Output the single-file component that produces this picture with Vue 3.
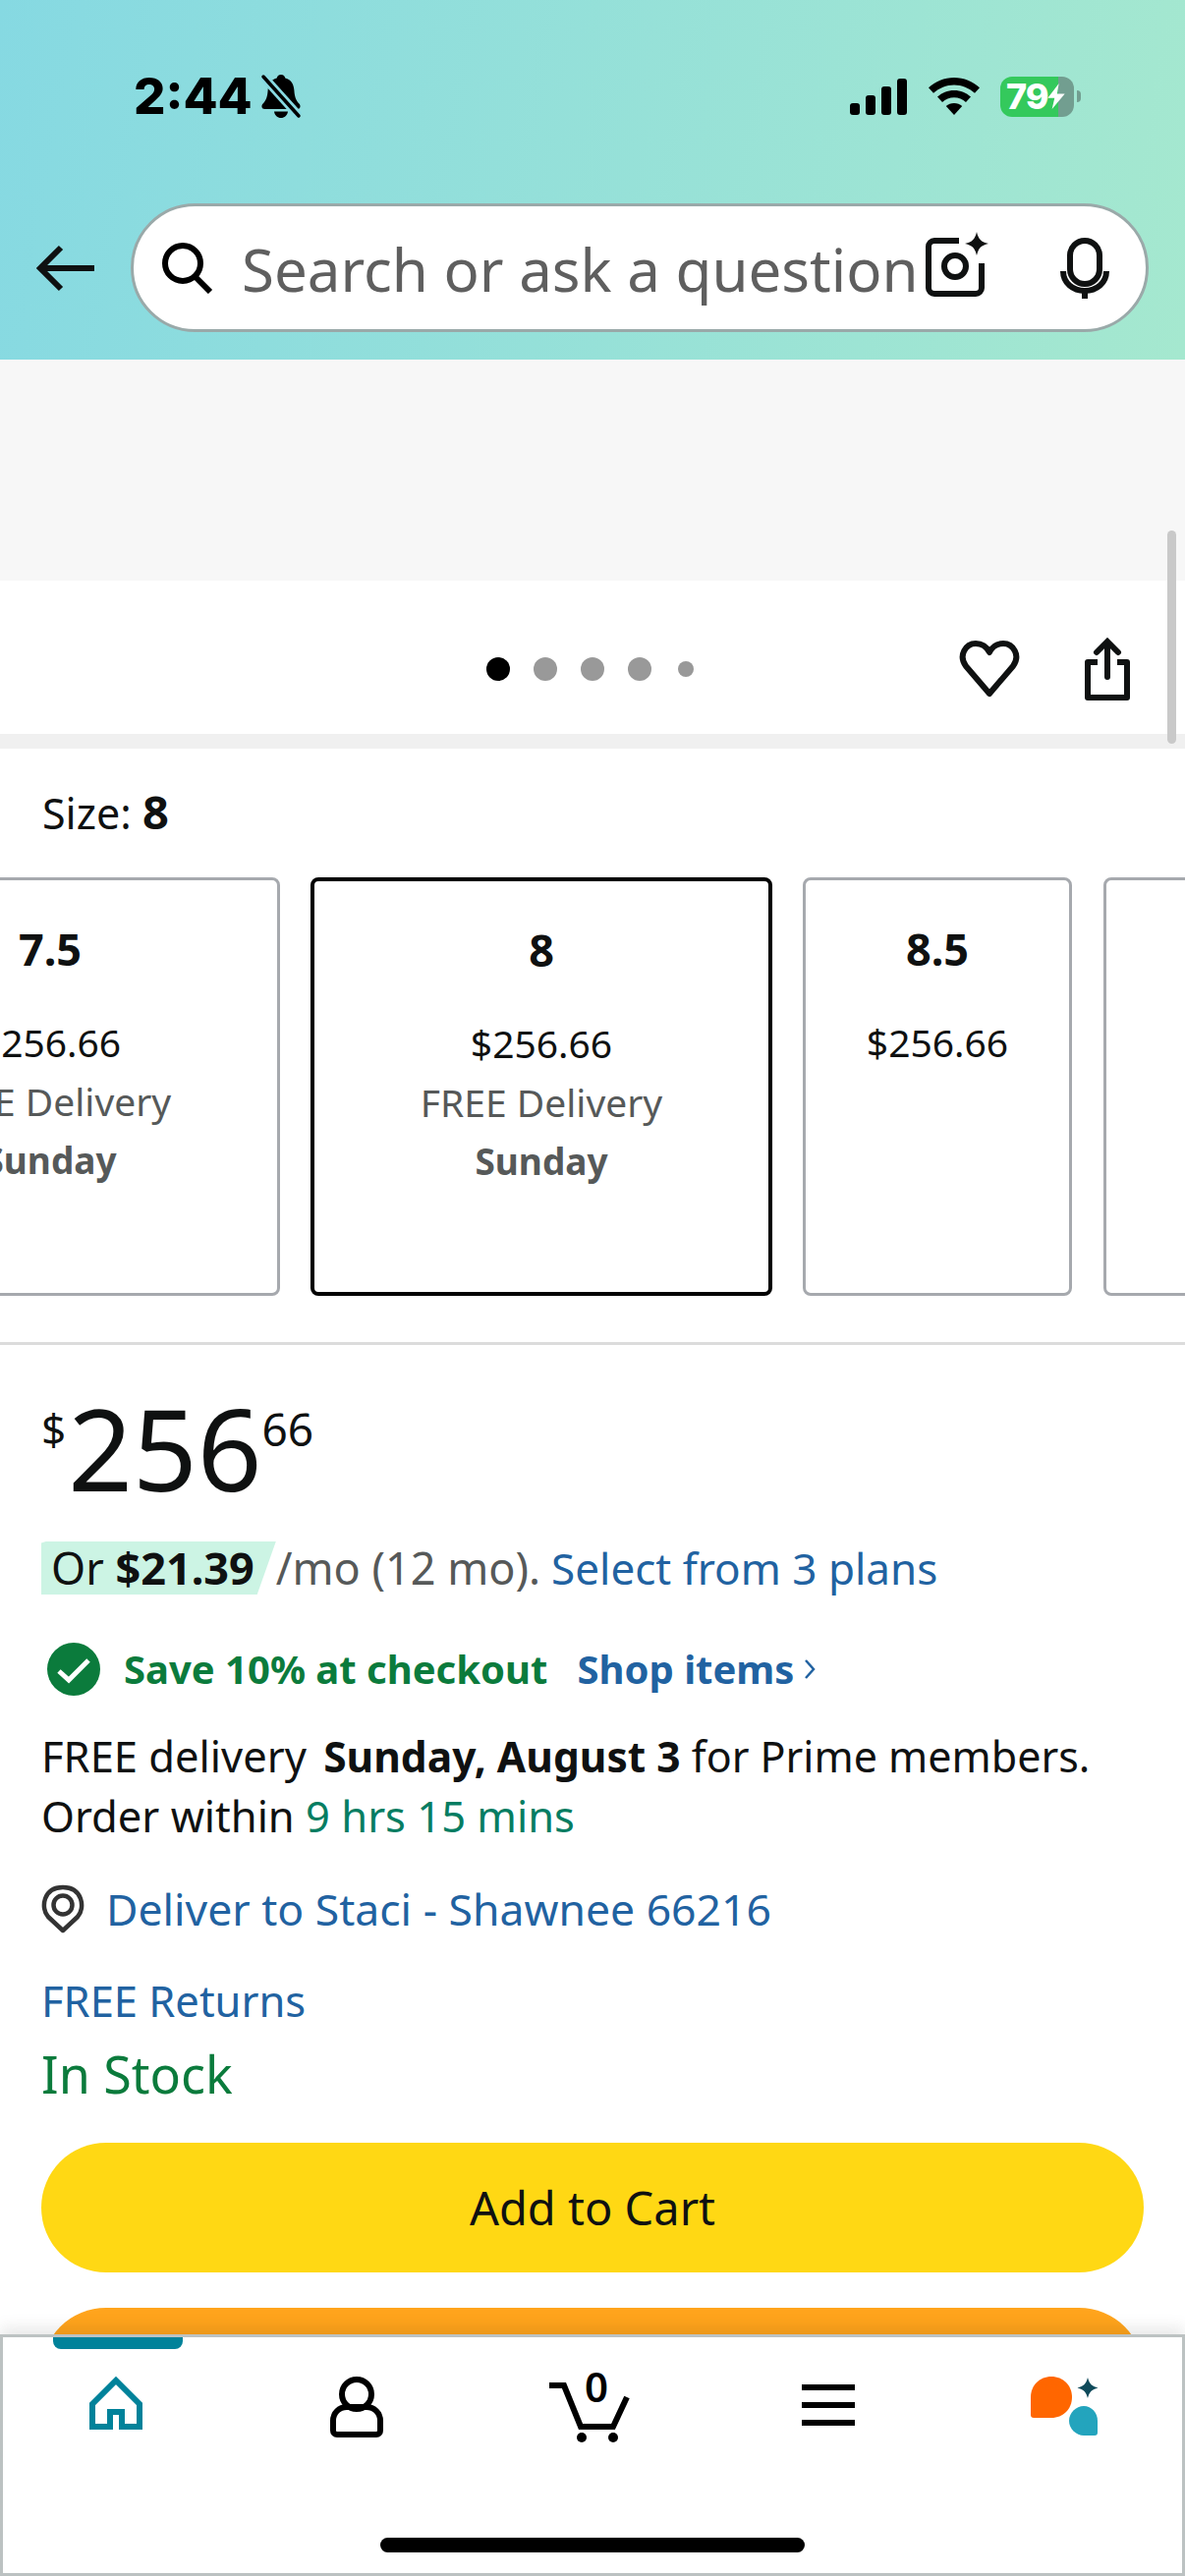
<template>
  <div class="page">
    <header class="top">
      <div class="status">
        <div class="status-left">
          <span class="time">2:44</span>
          <svg class="bell" width="42" height="46" viewBox="0 0 42 46">
            <path d="M21 1c-2.500 0-4 1.600-4.300 3.600C10.500 6.300 8 11 7.600 17c-.4 6-1.600 10-5 13.500C.8 32.300 1 36 4.500 36h33c3.500 0 3.700-3.700 1.900-5.500-3.400-3.500-4.600-7.500-5-13.500C34 11 31.500 6.300 25.300 4.600 25 2.600 23.500 1 21 1zM14 38.500h14c-.6 4-3.400 6.500-7 6.500s-6.400-2.500-7-6.500z" fill="#000" />
            <path d="M3 3l36 40" stroke="#88dae2" stroke-width="9" />
            <path d="M3 3l36 40" stroke="#000" stroke-width="3.500" stroke-linecap="round" />
          </svg>
        </div>
        <div class="status-right">
          <div class="signal">
            <i class="b1"></i><i class="b2"></i><i class="b3"></i><i class="b4"></i>
          </div>
          <svg class="wifi" width="52" height="38" viewBox="0 0 52 38">
            <path d="M26 0c10 0 19 3.800 26 10.300l-5 5.500C41.200 10.500 34 7.400 26 7.400S10.800 10.500 5 15.800L0 10.300C7 3.800 16 0 26 0z" />
            <path d="M26 13c6.600 0 12.500 2.500 17 6.600l-5 5.400c-3.200-2.900-7.400-4.700-12-4.700s-8.800 1.800-12 4.700l-5-5.400C13.500 15.500 19.400 13 26 13z" />
            <path d="M26 26c3.200 0 6 1.100 8.200 3L26 38l-8.200-9c2.200-1.900 5-3 8.200-3z" />
          </svg>
          <div class="battery">
            <span class="batt-num">79</span>
            <svg class="bolt" width="18" height="26" viewBox="0 0 20 30">
              <path d="M13 0L0 17h8L5 30 20 12h-9z" fill="#fff" />
            </svg>
          </div>
          <span class="batt-tip"></span>
        </div>
      </div>
      <div class="search-row">
        <svg class="back" width="60" height="48" viewBox="0 0 60 48">
          <path d="M59 24H5M25 3L4 24l21 21" fill="none" stroke="#0f1111" stroke-width="6" />
        </svg>
        <div class="search">
          <svg class="glass" width="52" height="52" viewBox="0 0 52 52">
            <circle cx="21" cy="21" r="18" fill="none" stroke="#000" stroke-width="6" />
            <path d="M33 34l16 16" stroke="#000" stroke-width="6" />
          </svg>
          <span class="placeholder">Search or ask a question</span>
          <svg class="cam" width="66" height="66" viewBox="0 0 66 66">
            <path d="M34 9H9a6 6 0 0 0-6 6v42a6 6 0 0 0 6 6h42a6 6 0 0 0 6-6V32" fill="none" stroke="#0f1111" stroke-width="6" />
            <circle cx="30" cy="35" r="11" fill="none" stroke="#0f1111" stroke-width="6" />
            <path d="M52 0c1.500 7 4.500 10.500 12 12-7.500 1.500-10.500 5-12 12-1.500-7-4.500-10.500-12-12 7.500-1.500 10.500-5 12-12z" fill="#0f1111" />
          </svg>
          <svg class="mic" width="50" height="62" viewBox="0 0 50 62">
            <rect x="10" y="3" width="30" height="44" rx="15" fill="none" stroke="#0f1111" stroke-width="6" />
            <path d="M3 34c0 12 10 20 22 20s22-8 22-20" fill="none" stroke="#0f1111" stroke-width="6" />
            <path d="M25 52v10" stroke="#0f1111" stroke-width="6" />
          </svg>
        </div>
      </div>
    </header>

    <div class="photo-end"></div>
    <div class="actions">
      <span></span>
      <div class="dots">
        <i class="dot on"></i><i class="dot"></i><i class="dot"></i><i class="dot"></i><i class="dot small"></i>
      </div>
      <div class="action-icons">
        <svg width="62" height="58" viewBox="0 0 62 58">
          <path d="M31 54L7 26C-1 15 7 3 17 3c6 0 11 3 14 9 3-6 8-9 14-9 10 0 18 12 10 23z" fill="none" stroke="#0f1111" stroke-width="6" stroke-linejoin="round" />
        </svg>
        <svg width="50" height="64" viewBox="0 0 50 64">
          <path d="M15 25H5v36h40V25H35" fill="none" stroke="#0f1111" stroke-width="6" stroke-linejoin="round" />
          <path d="M25 40V5M14 15L25 4l11 11" fill="none" stroke="#0f1111" stroke-width="6" stroke-linecap="round" />
        </svg>
      </div>
    </div>
    <div class="band"></div>

    <div class="size-label">Size: <b>8</b></div>
    <div class="sizes">
      <div v-for="s in sizes" :key="s.name" class="size-card" :class="{ picked: s.picked, thin: s.thin }">
        <div class="size-name">{{ s.name }}</div>
        <div class="size-price">{{ s.price }}</div>
        <div v-if="s.free" class="size-free">FREE Delivery</div>
        <div v-if="s.free" class="size-day">Sunday</div>
      </div>
    </div>
    <div class="divider"></div>

    <section class="buy">
      <div class="price">
        <span class="cur">$</span><span class="whole">256</span><span class="cents">66</span>
      </div>
      <div class="plan">
        <span class="plan-tag">Or <b>$21.39</b></span>
        <span class="muted">/mo (12 mo).</span>
        <span class="link">Select from 3 plans</span>
      </div>
      <div class="save">
        <svg width="54" height="54" viewBox="0 0 54 54">
          <circle cx="27" cy="27" r="27" fill="#0b7b3c" />
          <path d="M12 29l10 9 20-20" fill="none" stroke="#fff" stroke-width="5" />
        </svg>
        <b class="save-text">Save 10% at checkout</b>
        <b class="link shop">Shop items</b>
        <svg width="12" height="22" viewBox="0 0 12 22">
          <path d="M2 2l8 9-8 9" fill="none" stroke="#2162a1" stroke-width="2.500" />
        </svg>
      </div>
      <p class="delivery">
        FREE delivery <b>Sunday, August 3</b> <span class="prime">for Prime members.</span><br />
        Order within <span class="countdown">9 hrs 15 mins</span>
      </p>
      <div class="deliver-to">
        <svg width="44" height="50" viewBox="0 0 44 50">
          <path d="M22 47L7 33C-1 24 2 3 22 3s23 21 15 30z" fill="none" stroke="#333" stroke-width="4.500" stroke-linejoin="round" />
          <circle cx="22" cy="21" r="9.500" fill="none" stroke="#333" stroke-width="4.500" />
        </svg>
        <span class="link">Deliver to Staci - Shawnee 66216</span>
      </div>
      <div class="link returns">FREE Returns</div>
      <div class="stock">In Stock</div>
      <button class="btn cart-btn">Add to Cart</button>
      <button class="btn now-btn"></button>
    </section>

    <nav class="tabs">
      <span class="tab-mark"></span>
      <div class="tab home">
        <svg width="60" height="60" viewBox="0 0 60 60">
          <path d="M6 53h18V38h12v15h18V30L30 6 6 30z" fill="none" stroke="#00829a" stroke-width="6" />
        </svg>
      </div>
      <div class="tab">
        <svg width="60" height="64" viewBox="0 0 60 64">
          <circle cx="30" cy="20" r="15" fill="none" stroke="#000" stroke-width="6" />
          <path d="M20 33h20c8 0 14 6 14 14v10a4 4 0 0 1-4 4H10a4 4 0 0 1-4-4V47c0-8 6-14 14-14z" fill="none" stroke="#000" stroke-width="6" />
        </svg>
      </div>
      <div class="tab cart">
        <svg width="84" height="70" viewBox="0 0 84 70">
          <path d="M0 11h15l17 42h33l14-30" fill="none" stroke="#000" stroke-width="6" />
          <circle cx="33" cy="64" r="5" /><circle cx="65" cy="64" r="5" />
        </svg>
        <span class="cart-count">0</span>
      </div>
      <div class="tab">
        <div class="burger"><i></i><i></i><i></i></div>
      </div>
      <div class="tab rufus">
        <svg width="72" height="62" viewBox="0 0 72 62">
          <path d="M22 2c12 0 21 9 21 21s-9 21-21 21H4a3 3 0 0 1-3-3V23C1 11 10 2 22 2z" fill="#ff6600" />
          <path d="M55 32c8 0 14 7 14 15v12a3 3 0 0 1-3 3H55c-8 0-15-7-15-15s7-15 15-15z" fill="#23a4bd" />
          <path d="M59 3c1.500 6 4 9 10.500 10.500C63 15 60.500 18 59 24c-1.500-6-4-9-10.500-10.500C55 12 57.500 9 59 3z" fill="#0f4a5a" />
        </svg>
      </div>
      <span class="home-bar"></span>
    </nav>

    <span class="scrollbar"></span>
  </div>
</template>

<script setup>
const sizes = [
  { name: "7.5", price: "$256.66", free: true },
  { name: "8", price: "$256.66", free: true, picked: true },
  { name: "8.5", price: "$256.66", thin: true },
  { name: "9", price: "", thin: true },
];
</script>

<style>
body {
  margin: 0;
  background: #fff;
}
</style>

<style scoped>
.page {
  position: relative;
  width: 1206px;
  height: 2622px;
  overflow: hidden;
  background: #fff;
  color: #0f1111;
  font-family: "Noto Sans", "Open Sans", sans-serif;
}
.top {
  height: 366px;
  box-sizing: border-box;
  padding-top: 75px;
  background: linear-gradient(100deg, #86d9e2, #a5e8cf);
}
.status {
  height: 46px;
  display: flex;
  justify-content: space-between;
  padding: 0 106px 0 136px;
}
.status-left {
  display: flex;
  align-items: center;
  gap: 8px;
}
.time {
  font-family: Inter, sans-serif;
  font-weight: 800;
  font-size: 51px;
  line-height: 46px;
  color: #000;
}
.status-right {
  display: flex;
  align-items: center;
}
.signal {
  display: flex;
  align-items: flex-end;
  gap: 6px;
  height: 37px;
  margin-right: 22px;
}
.signal i {
  width: 10px;
  background: #000;
  border-radius: 3px;
}
.b1 { height: 12px; }
.b2 { height: 20px; }
.b3 { height: 29px; }
.b4 { height: 37px; }
.wifi {
  margin-right: 21px;
}
.battery {
  width: 75px;
  height: 41px;
  border-radius: 12px;
  display: flex;
  align-items: center;
  padding-left: 6px;
  box-sizing: border-box;
  background: linear-gradient(90deg, #34c95c 79%, #729e90 79%);
}
.batt-num {
  font-family: Inter, sans-serif;
  font-weight: 800;
  font-size: 36px;
  letter-spacing: -1px;
  color: #fff;
}
.bolt {
  margin-left: -1px;
  flex: none;
}
.batt-tip {
  width: 4px;
  height: 12px;
  margin-left: 3px;
  background: #729e90;
  border-radius: 0 6px 6px 0;
}
.search-row {
  display: flex;
  align-items: center;
  margin-top: 86px;
  padding-left: 37px;
}
.back {
  margin-right: 36px;
}
.search {
  width: 1036px;
  height: 131px;
  box-sizing: border-box;
  border: 3px solid #9aa9a9;
  border-radius: 66px;
  background: #fff;
  display: flex;
  align-items: center;
  padding-left: 29px;
}
.glass {
  margin-right: 29px;
}
.placeholder {
  width: 692px;
  flex: none;
  padding-top: 3px;
  white-space: nowrap;
  font-size: 60px;
  color: #5f5f5f;
}
.cam {
  margin: -8px 0 0 4px;
  flex: none;
}
.mic {
  margin: 0 0 0 71px;
  flex: none;
}
.photo-end {
  height: 225px;
  background: #f7f7f7;
}
.actions {
  height: 156px;
  box-sizing: border-box;
  padding-top: 24px;
  display: grid;
  grid-template-columns: 1fr auto 1fr;
  align-items: center;
}
.dots {
  display: flex;
  align-items: center;
  gap: 24px;
  margin-right: 5px;
}
.dot {
  width: 24px;
  height: 24px;
  border-radius: 50%;
  background: #999;
}
.dot.on {
  background: #000;
}
.dot.small {
  width: 16px;
  height: 16px;
  margin-left: 3px;
}
.action-icons {
  display: flex;
  align-items: center;
  justify-content: flex-end;
  gap: 64px;
  padding-right: 54px;
}
.band {
  height: 15px;
  background: #f0f0f0;
}
.size-label {
  margin-top: 34px;
  padding-left: 43px;
  font-size: 43px;
  line-height: 60px;
}
.size-label b {
  font-size: 47px;
}
.sizes {
  display: flex;
  gap: 32px;
  margin: 35px 0 0 -183px;
  width: 2000px;
}
.size-card {
  flex: none;
  width: 468px;
  height: 426px;
  box-sizing: border-box;
  border: 3px solid #a6a9ae;
  border-radius: 8px;
  padding-top: 40px;
  text-align: center;
  font-size: 39px;
  line-height: 60px;
}
.size-card.picked {
  width: 470px;
  margin: 0 -1px;
  border: 4px solid #000;
}
.size-card.thin {
  width: 274px;
}
.size-name {
  font-size: 45px;
  font-weight: 700;
  margin-bottom: 35px;
}
.size-free {
  color: #565959;
}
.size-day {
  color: #565959;
  font-weight: 700;
  font-size: 37px;
}
.divider {
  height: 3px;
  margin-top: 47px;
  background: #dcdcdc;
}
.buy {
  padding: 0 42px;
}
.price {
  display: flex;
  align-items: flex-start;
  margin-top: 40px;
}
.cur {
  font-size: 44px;
  line-height: 70px;
  margin: 10px 2px 0 0;
}
.whole {
  font-size: 115px;
  line-height: 130px;
}
.cents {
  font-size: 46px;
  line-height: 70px;
  margin: 10px 0 0 0;
}
.plan {
  display: flex;
  align-items: center;
  margin-top: 30px;
  font-size: 45px;
  line-height: 54px;
  white-space: nowrap;
}
.plan-tag {
  background: #ccf4e4;
  padding: 0 22px 0 10px;
  clip-path: polygon(0 3%, 2% 0, 100% 0, 92% 100%, 0 100%);
}
.muted {
  color: #565959;
  margin-right: 11px;
}
.plan .link {
  font-size: 44px;
}
.link {
  color: #2162a1;
}
.save {
  display: flex;
  align-items: center;
  margin-top: 49px;
  padding-left: 6px;
  font-size: 40px;
  line-height: 54px;
  white-space: nowrap;
}
.save-text {
  color: #0b7b3c;
  margin-left: 24px;
}
.shop {
  margin: 0 10px 0 30px;
}
.delivery {
  margin: 31px 0 0;
  font-size: 43.500px;
  line-height: 60px;
  white-space: nowrap;
}
.delivery b {
  font-size: 42.500px;
  margin-left: 6px;
}
.prime {
  font-size: 43px;
}
.countdown {
  color: #067d62;
}
.deliver-to {
  display: flex;
  align-items: center;
  gap: 22px;
  margin-top: 35px;
  font-size: 44.500px;
  line-height: 60px;
  white-space: nowrap;
}
.returns {
  margin-top: 33px;
  font-size: 43.500px;
  line-height: 60px;
}
.stock {
  margin-top: 12px;
  font-size: 52px;
  line-height: 66px;
  color: #0b7b3c;
}
.btn {
  display: block;
  width: 1122px;
  height: 132px;
  border: 0;
  border-radius: 66px;
  font-family: inherit;
  font-size: 47px;
  color: #0f1111;
}
.cart-btn {
  margin-top: 37px;
  background: #ffd814;
}
.now-btn {
  margin-top: 36px;
  background: #ffa41c;
}
.tabs {
  position: absolute;
  left: 0;
  right: 0;
  bottom: 0;
  height: 246px;
  box-sizing: border-box;
  border: 3px solid #bcc2c2;
  background: #fff;
  box-shadow: 0 -6px 16px rgba(0, 0, 0, 0.1);
  display: grid;
  grid-template-columns: repeat(5, 1fr);
  align-items: start;
}
.tab {
  display: flex;
  justify-content: center;
  padding-top: 38px;
}
.tab.home {
  padding-right: 10px;
}
.tab.cart {
  position: relative;
  padding-right: 4px;
}
.tab.rufus {
  padding-left: 2px;
}
.cart-count {
  position: absolute;
  top: 20px;
  left: 50%;
  margin-left: -8px;
  font-size: 42px;
  line-height: 60px;
  font-weight: 600;
  color: #000;
}
.burger {
  display: flex;
  flex-direction: column;
  gap: 12px;
  padding-top: 10px;
}
.burger i {
  display: block;
  width: 54px;
  height: 6px;
  background: #000;
}
.tab-mark {
  position: absolute;
  left: 51px;
  top: 0;
  width: 132px;
  height: 12px;
  background: #00829a;
  border-radius: 0 0 8px 8px;
}
.home-bar {
  position: absolute;
  left: 384px;
  bottom: 21px;
  width: 432px;
  height: 15px;
  background: #000;
  border-radius: 8px;
}
.scrollbar {
  position: absolute;
  left: 1188px;
  top: 540px;
  width: 9px;
  height: 217px;
  border-radius: 5px;
  background: #c9c9c9;
}
</style>
